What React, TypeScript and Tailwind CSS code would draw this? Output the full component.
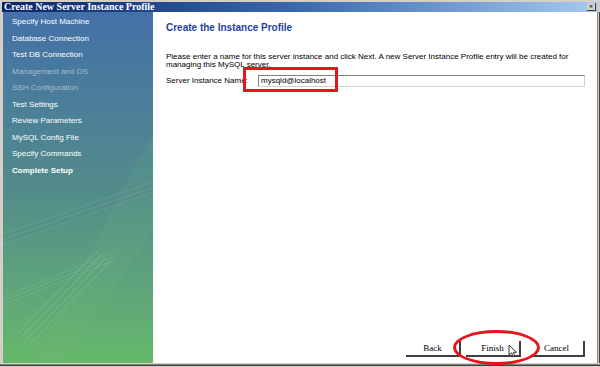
const STEPS = [
  { label: "Specify Host Machine", state: "done" },
  { label: "Database Connection", state: "done" },
  { label: "Test DB Connection", state: "done" },
  { label: "Management and OS", state: "off" },
  { label: "SSH Configuration", state: "off" },
  { label: "Test Settings", state: "done" },
  { label: "Review Parameters", state: "done" },
  { label: "MySQL Config File", state: "done" },
  { label: "Specify Commands", state: "done" },
  { label: "Complete Setup", state: "current" },
];

const sans = "font-['Liberation_Sans',Arial,sans-serif]";
const serif = "font-['Liberation_Serif','Times_New_Roman',serif]";

function SidebarArt() {
  // faint swooshes in the lower half of the wizard banner
  return (
    <svg className="absolute inset-0" width="150" height="351" viewBox="0 0 150 351">
      <polygon points="150,120 150,220 60,351 30,351" fill="#7cc07e" opacity="0.1" />
      <g stroke="#78aaa0" strokeWidth="1" fill="none" opacity="0.35">
        <line x1="0" y1="222" x2="150" y2="170" />
        <line x1="0" y1="227" x2="150" y2="175" />
        <line x1="0" y1="232" x2="150" y2="180" />
      </g>
      <g stroke="#4a7a98" strokeWidth="1" fill="none" opacity="0.3">
        <line x1="0" y1="225" x2="150" y2="173" />
        <line x1="0" y1="230" x2="150" y2="178" />
      </g>
      <g stroke="#86c294" strokeWidth="1" fill="none" opacity="0.4">
        <line x1="0" y1="285" x2="112" y2="240" />
        <line x1="0" y1="289" x2="112" y2="244" />
        <line x1="0" y1="293" x2="112" y2="248" />
      </g>
      <g stroke="#95cf9c" strokeWidth="1" fill="none" opacity="0.45">
        <line x1="15" y1="321" x2="95" y2="238" />
        <line x1="19" y1="325" x2="99" y2="242" />
        <line x1="23" y1="328" x2="103" y2="246" />
        <line x1="27" y1="331" x2="107" y2="250" />
      </g>
    </svg>
  );
}

function WizButton({ label, className = "" }: { label: string; className?: string }) {
  return (
    <button
      className={`w-[55px] h-[16px] bg-white border-r-2 border-b-2 border-[#404040] text-[9px] text-black ${serif} leading-none pt-[1px] ${className}`}
    >
      {label}
    </button>
  );
}

function Cursor() {
  return (
    <svg className="absolute left-[508px] top-[344px]" width="10" height="14" viewBox="0 0 10 14">
      <path d="M1 1 L1 11 L3.5 8.8 L5.5 13 L7 12.3 L5.2 8.3 L8.5 8.3 Z" fill="white" stroke="#222" strokeWidth="0.9" />
    </svg>
  );
}

export default function App() {
  return (
    <div className="relative w-[600px] h-[367px] bg-[#d4d0c8] overflow-hidden flex flex-col">
      <div className="h-[2px] bg-[#d4d0c8]" />
      {/* title bar */}
      <div className="h-[10px] mx-[2px] flex items-center justify-between bg-gradient-to-r from-[#0a246a] via-[#3a6ab0] to-[#a6caf0]">
        <span className={`pl-[2px] text-[10px] font-bold text-white leading-none ${serif}`}>
          Create New Server Instance Profile
        </span>
        <span className="mr-[2px] w-[9px] h-[8px] bg-[#d4d0c8] border-r border-b border-[#404040] flex items-center justify-center text-[7px] leading-none text-black">
          ×
        </span>
      </div>

      <div className="flex h-[351px] pl-[3px]">
        {/* step list */}
        <div className="relative w-[150px] h-full bg-gradient-to-b from-[#4470a8] via-[#528b8a] to-[#67b86a] overflow-hidden">
          <SidebarArt />
          <ul className={`relative pt-[2px] pl-[9px] ${sans} text-[8px]`}>
            {STEPS.map((s) => (
              <li
                key={s.label}
                className={`h-[16.5px] flex items-center ${
                  s.state === "off"
                    ? "text-[#a9bccb]"
                    : s.state === "current"
                    ? "text-white font-bold"
                    : "text-white"
                }`}
              >
                {s.label}
              </li>
            ))}
          </ul>
        </div>

        {/* page */}
        <div className={`w-[444px] h-full bg-white flex flex-col ${sans}`}>
          <h1 className="mt-[10px] ml-[13px] text-[10px] font-bold text-[#1f3f9f] leading-[12px]">
            Create the Instance Profile
          </h1>
          <p className="mt-[19px] ml-[13px] mr-[12px] text-[8px] leading-[8px] text-black">
            Please enter a name for this server instance and click Next. A new Server Instance Profile entry will be created for
            managing this MySQL server.
          </p>
          <div className="mt-[6px] ml-[13px] mr-[12px] flex items-center text-[8px] text-black">
            <span className="w-[92px] shrink-0">Server Instance Name:</span>
            <div className="flex-1 h-[12px] border-t border-l border-[#808080] border-r border-b border-r-[#d4d0c8] border-b-[#d4d0c8] flex items-center pl-[2px]">
              mysqld@localhost
            </div>
          </div>

          <div className="mt-auto mb-[6px] mr-[12px] flex justify-end">
            <WizButton label="Back" />
            <WizButton label="Finish" className="ml-[5px]" />
            <WizButton label="Cancel" className="ml-[9px]" />
          </div>
        </div>

        <div className="w-[3px] h-full border-l border-[#808080] bg-[#d4d0c8] border-r border-r-[#404040]" />
      </div>

      <div className="h-[1px] bg-[#d4d0c8]" />
      <div className="h-[1px] bg-[#808080]" />
      <div className="h-[1px] bg-[#404040]" />

      {/* annotation marks */}
      <div className="absolute left-[243px] top-[67px] w-[95px] h-[25px] border-[3px] border-[#e8141c]" />
      <div className="absolute left-[453px] top-[330px] w-[87px] h-[35px] border-[3px] border-[#e8141c] rounded-[50%]" />
      <Cursor />
    </div>
  );
}
